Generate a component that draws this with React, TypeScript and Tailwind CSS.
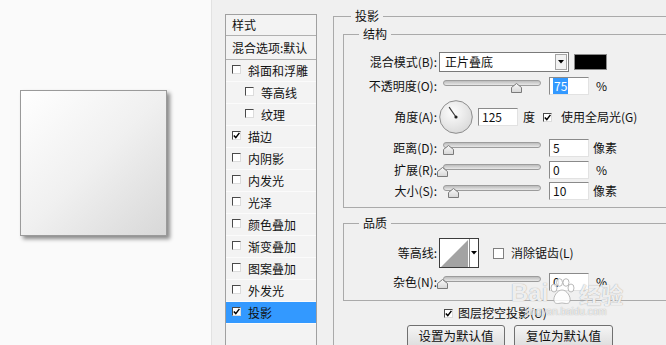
import type { ReactNode } from "react";

type StyleItem = {
  label: string;
  indent?: boolean;
  checked?: boolean;
  selected?: boolean;
};

const styleItems: StyleItem[] = [
  { label: "斜面和浮雕" },
  { label: "等高线", indent: true },
  { label: "纹理", indent: true },
  { label: "描边", checked: true },
  { label: "内阴影" },
  { label: "内发光" },
  { label: "光泽" },
  { label: "颜色叠加" },
  { label: "渐变叠加" },
  { label: "图案叠加" },
  { label: "外发光" },
  { label: "投影", checked: true, selected: true },
];

function Check({ checked, className = "" }: { checked?: boolean; className?: string }) {
  return (
    <span
      className={`flex h-[9px] w-[9px] shrink-0 items-center justify-center border border-[#4a4a4a] border-r-[#dcdcdc] border-b-[#dcdcdc] bg-white ${className}`}
    >
      {checked && (
        <svg width="7" height="7" viewBox="0 0 7 7">
          <path d="M0.8 3.4 L2.8 5.6 L6.4 0.9" fill="none" stroke="#000" strokeWidth="1.5" />
        </svg>
      )}
    </span>
  );
}

function Label({ children }: { children: ReactNode }) {
  return <span className="w-[93px] shrink-0 text-right">{children}</span>;
}

function Field({ children, className = "" }: { children: ReactNode; className?: string }) {
  return (
    <div
      className={`flex h-[18px] w-[40px] shrink-0 items-center border border-[#8a8a8a] border-r-[#e2e2e2] border-b-[#e2e2e2] bg-white pl-[3px] ${className}`}
    >
      {children}
    </div>
  );
}

function Slider({ thumb }: { thumb: number }) {
  return (
    <div className="relative h-[18px] w-[106px] shrink-0">
      <div className="absolute left-[6px] right-[2px] top-[3px] h-[6px] rounded-full border border-[#9c9c9c] bg-gradient-to-b from-[#bcbcbc] to-[#e8e8e8]" />
      <svg
        className="absolute top-[6px]"
        style={{ left: thumb - 5.5 }}
        width="11"
        height="10"
        viewBox="0 0 11 10"
      >
        <defs>
          <linearGradient id="thumbg" x1="0" y1="0" x2="0" y2="1">
            <stop offset="0" stopColor="#fafafa" />
            <stop offset="1" stopColor="#d6d6d6" />
          </linearGradient>
        </defs>
        <polygon points="0.5,9.5 0.5,4.5 5.5,0.5 10.5,4.5 10.5,9.5" fill="url(#thumbg)" stroke="#7a7a7a" />
      </svg>
    </div>
  );
}

function Dial() {
  const a = (125 * Math.PI) / 180;
  return (
    <svg className="ml-[2px] shrink-0" width="34" height="34" viewBox="0 0 34 34">
      <defs>
        <radialGradient id="dialg" cx="0.4" cy="0.35" r="0.7">
          <stop offset="0" stopColor="#fdfdfd" />
          <stop offset="1" stopColor="#d9d9d9" />
        </radialGradient>
      </defs>
      <circle cx="17" cy="17" r="16.3" fill="url(#dialg)" stroke="#8c8c8c" />
      <line
        x1="17"
        y1="17"
        x2={17 + 12 * Math.cos(a)}
        y2={17 - 12 * Math.sin(a)}
        stroke="#3a3a3a"
        strokeWidth="1.2"
      />
      <circle cx="17" cy="17" r="1.6" fill="#222" />
    </svg>
  );
}

function DownArrow() {
  return (
    <svg width="6" height="4" viewBox="0 0 6 4">
      <polygon points="0,0 6,0 3,3.5" fill="#000" />
    </svg>
  );
}

export default function App() {
  return (
    <div className="flex h-[345px] w-[666px] overflow-hidden bg-[#f0f0f0] text-[12px] leading-[16px] text-[#111] [font-family:'Noto_Sans_CJK_SC','Microsoft_YaHei',sans-serif]">
      {/* preview */}
      <div className="h-full w-[212px] shrink-0 border-r border-[#e2e2e2] bg-[#fafafa] pl-[20px] pt-[90px]">
        <div className="h-[146px] w-[147px] border border-[#9a9a9a] bg-gradient-to-br from-white via-[#f0f0f0] to-[#d8d8d8] shadow-[3px_3px_4px_rgba(0,0,0,0.45)]" />
      </div>

      <div className="relative flex shrink-0 pl-[13px] pt-[7px]">
        {/* style list */}
        <div className="mt-[7px] h-[340px] w-[92px] shrink-0 border border-[#a0a0a0] bg-[#f3f3f3]">
          <div className="h-[21px] border-b border-[#b0b0b0] pl-[6px] leading-[20px]">样式</div>
          <div className="h-[24px] border-b border-[#b0b0b0] pl-[6px] leading-[23px]">混合选项:默认</div>
          {styleItems.map((item) => (
            <div
              key={item.label}
              className={`flex h-[22px] items-center border-b border-[#fbfbfb] ${
                item.indent ? "pl-[19px]" : "pl-[6px]"
              } ${item.selected ? "bg-[#3399ff]" : ""}`}
            >
              <Check checked={item.checked} className="mb-[3px]" />
              <span className="ml-[7px] whitespace-nowrap">{item.label}</span>
            </div>
          ))}
        </div>

        {/* settings */}
        <div className="ml-[16px] w-[360px] shrink-0">
          <fieldset className="h-[360px] border border-[#aaaaaa]">
            <legend className="ml-[17px] px-[4px] leading-[18px]">投影</legend>
            <div className="pl-[9px]">
              <fieldset className="w-[345px] border border-[#aaaaaa] pb-[7px]">
                <legend className="ml-[15px] px-[4px] leading-[18px]">结构</legend>

                <div className="mt-[9px] flex h-[20px] items-center">
                  <Label>混合模式(B):</Label>
                  <div className="ml-[2px] flex h-[20px] w-[130px] shrink-0 items-center justify-between border border-[#7a7a7a] bg-white pl-[5px] pr-[1px]">
                    <span>正片叠底</span>
                    <span className="flex h-[16px] w-[12px] items-center justify-center border border-[#a5a5a5] bg-[#f2f2f2]">
                      <DownArrow />
                    </span>
                  </div>
                  <div className="ml-[5px] h-[16px] w-[33px] shrink-0 border border-[#8a8a8a] bg-black" />
                </div>

                <div className="mt-[5px] flex h-[18px] items-center">
                  <Label>不透明度(O):</Label>
                  <Slider thumb={79} />
                  <Field className="ml-[6px]">
                    <span className="bg-[#3399ff] px-[1px] text-white">75</span>
                  </Field>
                  <span className="ml-[7px]">%</span>
                </div>

                <div className="mt-[5px] flex h-[34px] items-center">
                  <Label>角度(A):</Label>
                  <Dial />
                  <Field className="ml-[5px]">125</Field>
                  <span className="ml-[5px]">度</span>
                  <Check checked className="ml-[8px]" />
                  <span className="ml-[9px] whitespace-nowrap">使用全局光(G)</span>
                </div>

                <div className="mt-[5px] flex h-[18px] items-center">
                  <Label>距离(D):</Label>
                  <Slider thumb={11} />
                  <Field className="ml-[6px]">5</Field>
                  <span className="ml-[4px]">像素</span>
                </div>

                <div className="mt-[4px] flex h-[18px] items-center">
                  <Label>扩展(R):</Label>
                  <Slider thumb={5} />
                  <Field className="ml-[6px]">0</Field>
                  <span className="ml-[7px]">%</span>
                </div>

                <div className="mt-[3px] flex h-[18px] items-center">
                  <Label>大小(S):</Label>
                  <Slider thumb={16} />
                  <Field className="ml-[6px]">10</Field>
                  <span className="ml-[4px]">像素</span>
                </div>
              </fieldset>

              <fieldset className="mt-[6px] w-[345px] border border-[#aaaaaa] pb-[9px]">
                <legend className="ml-[15px] px-[4px] leading-[18px]">品质</legend>

                <div className="mt-[6px] flex h-[30px] items-center">
                  <Label>等高线:</Label>
                  <div className="ml-[2px] flex h-[30px] w-[40px] shrink-0 border border-[#3c3c3c] bg-white">
                    <svg width="29" height="28" viewBox="0 0 29 28">
                      <polygon points="1,28 28,1 28,28" fill="#a3a3a3" />
                    </svg>
                    <div className="flex flex-1 items-center justify-center border-l border-[#8a8a8a]">
                      <DownArrow />
                    </div>
                  </div>
                  <span className="ml-[14px] h-[11px] w-[11px] shrink-0 border border-[#7f7f7f] bg-white" />
                  <span className="ml-[7px] whitespace-nowrap">消除锯齿(L)</span>
                </div>

                <div className="mt-[5px] flex h-[18px] items-center">
                  <Label>杂色(N):</Label>
                  <Slider thumb={5} />
                  <Field className="ml-[6px]">0</Field>
                  <span className="ml-[7px]">%</span>
                </div>
              </fieldset>

              <div className="mt-[4px] flex h-[16px] items-center">
                <Check checked className="ml-[101px]" />
                <span className="ml-[5px] whitespace-nowrap">图层挖空投影(U)</span>
              </div>

              <div className="ml-[64px] mt-[4px] flex gap-[9px]">
                <button
                  type="button"
                  className="flex h-[24px] w-[98px] items-start justify-center rounded-[3px] border border-[#707070] bg-gradient-to-b from-[#f5f5f5] to-[#dcdcdc] pt-[2px] text-[12.5px] leading-[16px]"
                >
                  设置为默认值
                </button>
                <button
                  type="button"
                  className="flex h-[24px] w-[99px] items-start justify-center rounded-[3px] border border-[#707070] bg-gradient-to-b from-[#f5f5f5] to-[#dcdcdc] pt-[2px] text-[12.5px] leading-[16px]"
                >
                  复位为默认值
                </button>
              </div>
            </div>
          </fieldset>
        </div>

        {/* watermark */}
        <div className="pointer-events-none absolute left-[299px] top-[278px] flex flex-col text-white/85 [text-shadow:0_0_1px_#8a8a8a]">
          <div className="flex items-end">
            <span className="text-[24px] font-bold leading-[28px] [font-family:'Liberation_Sans',sans-serif]">Bai</span>
            <svg className="mb-[1px]" width="28" height="28" viewBox="0 0 28 28">
              <g fill="rgba(255,255,255,0.85)" stroke="#a8a8a8" strokeWidth="0.8">
                <ellipse cx="6" cy="10" rx="3" ry="4" />
                <ellipse cx="11.5" cy="4.5" rx="3" ry="3.8" />
                <ellipse cx="18" cy="4.5" rx="3" ry="3.8" />
                <ellipse cx="23" cy="10" rx="3" ry="4" />
                <path d="M14 12 C9 12 5 19 6 23 C7 27 12 25 14 25 C16 25 21 27 22 23 C23 19 19 12 14 12 Z" />
              </g>
            </svg>
            <span className="ml-[3px] text-[22px] font-bold leading-[28px]">经验</span>
          </div>
          <span className="ml-[15px] text-[10px] leading-[10px] [font-family:'Liberation_Sans',sans-serif]">jingyan.baidu.com</span>
        </div>
      </div>
    </div>
  );
}
